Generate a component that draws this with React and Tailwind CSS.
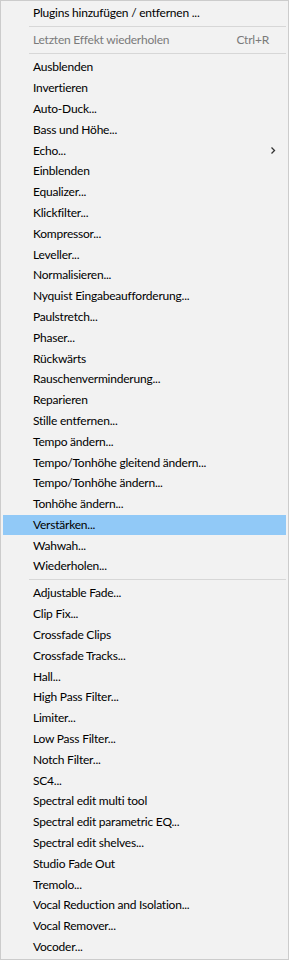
import React from "react";

const group1 = [
  "Ausblenden",
  "Invertieren",
  "Auto-Duck...",
  "Bass und Höhe...",
  "Echo...",
  "Einblenden",
  "Equalizer...",
  "Klickfilter...",
  "Kompressor...",
  "Leveller...",
  "Normalisieren...",
  "Nyquist Eingabeaufforderung...",
  "Paulstretch...",
  "Phaser...",
  "Rückwärts",
  "Rauschenverminderung...",
  "Reparieren",
  "Stille entfernen...",
  "Tempo ändern...",
  "Tempo/Tonhöhe gleitend ändern...",
  "Tempo/Tonhöhe ändern...",
  "Tonhöhe ändern...",
  "Verstärken...",
  "Wahwah...",
  "Wiederholen...",
];

const group2 = [
  "Adjustable Fade...",
  "Clip Fix...",
  "Crossfade Clips",
  "Crossfade Tracks...",
  "Hall...",
  "High Pass Filter...",
  "Limiter...",
  "Low Pass Filter...",
  "Notch Filter...",
  "SC4...",
  "Spectral edit multi tool",
  "Spectral edit parametric EQ...",
  "Spectral edit shelves...",
  "Studio Fade Out",
  "Tremolo...",
  "Vocal Reduction and Isolation...",
  "Vocal Remover...",
  "Vocoder...",
];

function Row({ label, disabled, shortcut, submenu, active }) {
  return (
    <div
      className={
        "mx-[2px] h-[20.8px] flex items-center pl-[30px] pr-[10px] " +
        (active ? "bg-[#91c9f7]" : "")
      }
    >
      <span
        className={
          "flex-1 whitespace-nowrap " + (disabled ? "text-[#7a7a7a]" : "text-black")
        }
      >
        {label}
      </span>
      {shortcut && (
        <span className="text-[#7a7a7a] mr-[7px] whitespace-nowrap">{shortcut}</span>
      )}
      {submenu && (
        <svg width="6" height="9" viewBox="0 0 6 9">
          <path d="M1.5 1.5 L4.5 4.5 L1.5 7.5" fill="none" stroke="#333" strokeWidth="1.3" />
        </svg>
      )}
    </div>
  );
}

function Sep() {
  return (
    <div className="h-[6.2px] flex items-center ml-[28px] mr-[2px]">
      <div className="h-px w-full bg-[#d7d7d7]" />
    </div>
  );
}

export default function App() {
  return (
    <div
      className="w-[289px] h-[960px] bg-[#f2f2f2] border border-[#cccccc] pt-[2px] text-[12px] leading-none tracking-[-0.22px] overflow-hidden"
      style={{ fontFamily: 'Lato, "Noto Sans", sans-serif' }}
    >
      <Row label="Plugins hinzufügen / entfernen ..." />
      <Sep />
      <Row label="Letzten Effekt wiederholen" disabled shortcut="Ctrl+R" />
      <Sep />
      {group1.map((l) => (
        <Row key={l} label={l} submenu={l === "Echo..."} active={l === "Verstärken..."} />
      ))}
      <Sep />
      {group2.map((l) => (
        <Row key={l} label={l} />
      ))}
    </div>
  );
}
